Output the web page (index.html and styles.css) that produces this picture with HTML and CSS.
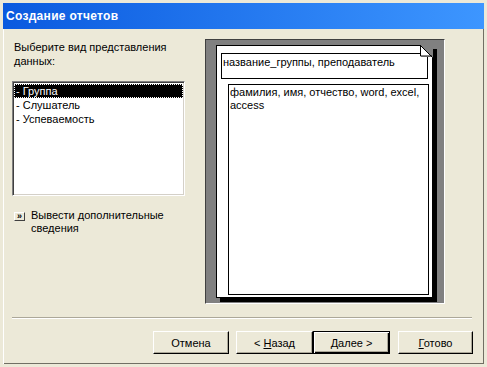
FILE: index.html
```html
<!DOCTYPE html>
<html lang="ru">
<head>
    <meta charset="UTF-8">
    <title>Создание отчетов</title>
    <link rel="stylesheet" href="styles.css">
</head>
<body>
    <div class="window">
        <div class="titlebar">Создание отчетов</div>
        <div class="content">
            <div class="main">
                <div class="left">
                    <p class="prompt">Выберите вид представления данных:</p>
                    <ul class="listbox">
                        <li class="selected">- Группа</li>
                        <li>- Слушатель</li>
                        <li>- Успеваемость</li>
                    </ul>
                    <div class="more">
                        <span class="more-btn">»</span>
                        <span class="more-text">Вывести дополнительные сведения</span>
                    </div>
                </div>
                <div class="preview">
                    <div class="page">
                        <div class="group-box">название_группы, преподаватель</div>
                        <div class="detail-box">фамилия, имя, отчество, word, excel, access</div>
                        <svg class="dog-ear" width="13" height="13" viewBox="0 0 13 13">
                            <polygon points="0,0 13,0 13,13" fill="#808080"/>
                            <polygon points="1,2 1,12 11,12" fill="#c0c0c0"/>
                            <polygon points="0.5,0.5 0.5,11 11,11" fill="#fff"/>
                            <polyline points="0.5,0 0.5,11 12,11" fill="none" stroke="#000"/>
                            <line x1="0" y1="0" x2="12.5" y2="12.5" stroke="#000"/>
                        </svg>
                    </div>
                </div>
            </div>
            <div class="separator"></div>
            <div class="buttons">
                <button class="btn cancel">Отмена</button>
                <button class="btn back">&lt; <u>Н</u>азад</button>
                <button class="btn next default"><u>Д</u>алее &gt;</button>
                <button class="btn finish"><u>Г</u>отово</button>
            </div>
        </div>
    </div>
</body>
</html>
```

FILE: styles.css
```css
body {
    margin: 0;
    font-family: "Liberation Sans", Arial, sans-serif;
    font-size: 11px;
    color: #000;
}
.window {
    width: 487px;
    height: 367px;
    box-sizing: border-box;
    background-color: #ece9d8;
    border: 3px solid #ece9d8;
    box-shadow: inset 1px 1px 0 #fff, inset -1px -1px 0 #716f64;
    position: relative;
}
.titlebar {
    height: 26px;
    line-height: 27px;
    padding-left: 3px;
    background: linear-gradient(to right, #0a5adf, #3d96ff);
    color: #fff;
    font-weight: bold;
    font-size: 12px;
    letter-spacing: 0.3px;
}
.content {
    padding: 10px 11px 0 9px;
}
.main {
    display: flex;
    height: 265px;
}
.left {
    width: 173px;
}
.prompt {
    margin: 1px 0 0 2px;
    line-height: 14px;
    width: 160px;
}
.listbox {
    list-style: none;
    margin: 13px 0 0 0;
    padding: 2px 1px;
    box-sizing: border-box;
    height: 115px;
    background-color: #fff;
    border: 1px solid;
    border-color: #808080 #fff #fff #808080;
    box-shadow: inset 1px 1px 0 #404040, inset -1px -1px 0 #d4d0c8;
}
.listbox li {
    line-height: 14px;
    padding-left: 2px;
}
.listbox li.selected {
    background-color: #000;
    color: #fff;
    outline: 1px dotted #fff;
    outline-offset: -1px;
}
.more {
    display: flex;
    align-items: flex-start;
    margin-top: 13px;
}
.more-btn {
    display: inline-block;
    width: 11px;
    height: 9px;
    margin: 3px 6px 0 2px;
    box-sizing: border-box;
    border: 1px solid;
    border-color: #fff #404040 #404040 #fff;
    font-size: 9px;
    line-height: 6px;
    font-weight: bold;
    text-align: center;
}
.more-text {
    line-height: 13px;
    width: 140px;
}
.preview {
    margin-left: 20px;
    width: 240px;
    box-sizing: border-box;
    background-color: #808080;
    border: 1px solid;
    border-color: #404040 #fff #fff #404040;
    padding: 5px 0 0 10px;
}
.page {
    position: relative;
    width: 217px;
    height: 253px;
    box-sizing: border-box;
    background-color: #fff;
    border: 1px solid #000;
    box-shadow: 4px 4px 0 #000;
}
.group-box {
    margin: 7px 0 0 4px;
    width: 207px;
    height: 26px;
    box-sizing: border-box;
    border: 1px solid #000;
    padding: 2px 1px;
    line-height: 13px;
}
.detail-box {
    margin: 5px 0 0 11px;
    width: 201px;
    height: 211px;
    box-sizing: border-box;
    border: 1px solid #000;
    padding: 1px 1px;
    line-height: 13px;
}
.dog-ear {
    position: absolute;
    top: -1px;
    right: -1px;
}
.separator {
    margin-top: 13px;
    width: 460px;
    height: 1px;
    background-color: #aca899;
    border-bottom: 1px solid #fff;
}
.buttons {
    display: flex;
    justify-content: flex-end;
    margin-top: 12px;
}
.btn {
    height: 23px;
    box-sizing: border-box;
    margin: 0;
    padding: 0;
    background-color: #ece9d8;
    font-family: "Liberation Sans", Arial, sans-serif;
    font-size: 11px;
    color: #000;
    border: 1px solid;
    border-color: #fff #000 #000 #fff;
    box-shadow: inset -1px -1px 0 #aca899;
}
.btn u {
    text-decoration: underline;
}
.cancel {
    width: 76px;
    margin-right: 7px;
}
.back {
    width: 77px;
}
.next {
    width: 77px;
    margin-right: 8px;
}
.finish {
    width: 75px;
}
.default {
    border-color: #000;
    box-shadow: inset 1px 1px 0 #fff, inset -1px -1px 0 #000, inset -2px -2px 0 #aca899;
}
```
